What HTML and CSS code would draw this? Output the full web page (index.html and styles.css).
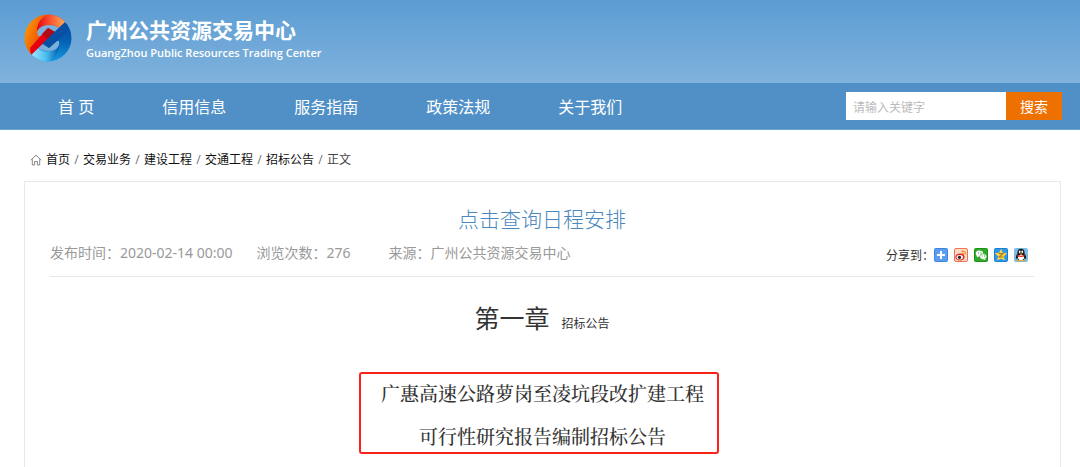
FILE: index.html
```html
<!DOCTYPE html>
<html lang="zh-CN">
<head>
<meta charset="utf-8">
<title>广州公共资源交易中心</title>
<link rel="stylesheet" href="styles.css">
</head>
<body>
<header class="banner">
  <svg class="logo" viewBox="0 0 48 48" aria-hidden="true">
    <defs>
      <linearGradient id="warm" x1="0" y1="0.2" x2="1" y2="0.6"><stop offset="0" stop-color="#ffa000"/><stop offset=".35" stop-color="#f25a08"/><stop offset=".8" stop-color="#e60012"/></linearGradient>
      <linearGradient id="cool" x1=".6" y1="0" x2=".4" y2="1"><stop offset="0" stop-color="#04459a"/><stop offset=".5" stop-color="#0560b4"/><stop offset="1" stop-color="#17a4e8"/></linearGradient>
      <linearGradient id="peach" x1="0" y1="0" x2="1" y2="0"><stop offset="0" stop-color="#e60012"/><stop offset=".4" stop-color="#fa4b2c"/><stop offset="1" stop-color="#ffb057"/></linearGradient>
      <linearGradient id="ice" x1="0" y1="0" x2="1" y2="0"><stop offset="0" stop-color="#a6e6ff"/><stop offset=".55" stop-color="#49bdf0"/><stop offset="1" stop-color="#005bac"/></linearGradient>
      <clipPath id="disc"><circle cx="24" cy="24" r="23.5"/></clipPath>
    </defs>
    <g clip-path="url(#disc)">
      <path fill="url(#warm)" d="M0 0H48L7 41L0 48Z"/>
      <path fill="url(#cool)" d="M48 0V48H0L7 41L41 8Z"/>
      <path fill="url(#peach)" d="M13 15C14 5 22 0 29 0C36 1 40 4 42 8L35 14C30 9 21 9 13 17Z"/>
      <path fill="url(#ice)" d="M7 41L14 34C19 39 27 39 35 31C34 42 28 48 22 48C15 47 10 45 7 41Z"/>
      <path fill="#7bb0db" d="M14 22C11 15 18 11 25 11C30 11 33 12 35 14L30 19L24 15L17 22Z"/>
      <path fill="#7bb0db" d="M14 34L18 30L25 34L32 27H35C36 34 31 37 24 37C20 37 16 36 14 34Z"/>
      <path fill="#e60012" d="M7 41L31 18L24 14L6 34Z"/>
      <path fill="#b00b16" d="M18 20L24 14L31 18L24 25Z"/>
      <path fill="#0850a4" d="M19 29L41 8L44 17L32 28L25 34Z"/>
    </g>
  </svg>
  <div class="brand">
    <div class="site-name">广州公共资源交易中心</div>
    <div class="site-sub">GuangZhou Public Resources Trading Center</div>
  </div>
</header>
<nav class="nav">
  <div class="menu">
    <a href="#">首&nbsp;页</a><a href="#">信用信息</a><a href="#">服务指南</a><a href="#">政策法规</a><a href="#">关于我们</a>
  </div>
  <form class="search">
    <input type="text" aria-label="请输入关键字" placeholder="请输入关键字">
    <button type="button">搜索</button>
  </form>
</nav>
<main class="page">
  <div class="crumbs">
    <svg class="home" viewBox="0 0 12 12" aria-hidden="true"><path d="M.7 6.2L6 1.2L11.3 6.2M2.3 5.2V11H4.6V7.5H7.4V11H9.7V5.2" fill="none" stroke="#888"/></svg>
    <a href="#">首页</a><i>/</i><a href="#">交易业务</a><i>/</i><a href="#">建设工程</a><i>/</i><a href="#">交通工程</a><i>/</i><a href="#">招标公告</a><i>/</i><span>正文</span>
  </div>
  <article class="panel">
    <h1 class="title"><a href="#">点击查询日程安排</a></h1>
    <div class="meta">
      <span class="date">发布时间：2020-02-14 00:00</span>
      <span class="views">浏览次数：276</span>
      <span>来源：广州公共资源交易中心</span>
      <div class="share">
        <span>分享到：</span>
        <a href="#" aria-label="更多"><svg viewBox="0 0 14 14"><rect width="14" height="14" rx="2" fill="#3e86dc"/><rect x="1" y="1" width="12" height="12" rx="1" fill="#5c9df0"/><path d="M7 3V11M3 7H11" stroke="#fff" stroke-width="2"/></svg></a>
        <a href="#" aria-label="微博"><svg viewBox="0 0 14 14"><rect x=".5" y=".5" width="13" height="13" rx="1.5" fill="#fbdcc9" stroke="#ee7550"/><path d="M7.5 3.2Q11.7 2.4 11.3 6.4M7.7 5.2Q9.6 4.8 9.4 6.5" fill="none" stroke="#f08a22" stroke-width="1.2"/><ellipse cx="6" cy="9" rx="4.7" ry="3.5" fill="#dc2924"/><ellipse cx="5.8" cy="9.3" rx="3.2" ry="2.2" fill="#fff"/><circle cx="5.5" cy="9.3" r="1.6" fill="#222"/></svg></a>
        <a href="#" aria-label="微信"><svg viewBox="0 0 14 14"><rect width="14" height="14" rx="2" fill="#189417"/><rect x="1" y="1" width="12" height="12" rx="1" fill="#30a928"/><ellipse cx="5.5" cy="5.5" rx="3.7" ry="3" fill="#fff"/><path d="M3 7L2.8 9.5L5.5 8Z" fill="#fff"/><ellipse cx="9.2" cy="8.6" rx="3.5" ry="2.8" fill="#fff" stroke="#30a928" stroke-width=".6"/><path d="M9 11L11.5 12L11 10Z" fill="#fff"/><path d="M4 5H5M6.5 5H7.5M7.6 8H8.5M10 8H11" stroke="#279421"/></svg></a>
        <a href="#" aria-label="QQ空间"><svg viewBox="0 0 14 14"><rect width="14" height="14" rx="2" fill="#1680d2"/><rect x="1" y="1" width="12" height="12" rx="1" fill="#3299e8"/><path d="M7 .8L8.8 4.8L13.2 5.2L9.9 8.3L10.8 12.6L7 10.4L3.2 12.6L4.1 8.3L.8 5.2L5.2 4.8Z" fill="#ffd53b"/><path d="M4.8 5.5H9L5 9H9.4" fill="none" stroke="#a9782b" stroke-width="1.1"/></svg></a>
        <a href="#" aria-label="QQ好友"><svg viewBox="0 0 14 14"><rect width="14" height="14" rx="2" fill="#79bde9"/><path d="M2 11Q1.5 7 3.5 6Q3 .8 7 .8Q11 .8 10.5 6Q12.5 7 12 11L10.5 10L10 12H4L3.5 10Z" fill="#161616"/><ellipse cx="7" cy="9.5" rx="3" ry="2.7" fill="#fff"/><path d="M3.3 6.8Q7 8.8 10.7 6.8V8.3Q7 9.8 3.3 8.3Z" fill="#e62820"/><ellipse cx="5.7" cy="3.7" rx=".9" ry="1.2" fill="#fff"/><ellipse cx="8.3" cy="3.7" rx=".9" ry="1.2" fill="#fff"/><path d="M5 5.6H9L7 6.7ZM2.5 12H6.5V13.3H2.5ZM7.5 12H11.5V13.3H7.5Z" fill="#f5a51c"/></svg></a>
      </div>
    </div>
    <h2 class="chapter">第一章<small>招标公告</small></h2>
    <div class="notice-row">
      <div class="notice">
        <p>广惠高速公路萝岗至凌坑段改扩建工程</p>
        <p>可行性研究报告编制招标公告</p>
      </div>
    </div>
  </article>
</main>
</body>
</html>
```
FILE: styles.css
```css
* { box-sizing: border-box; }
body {
  margin: 0;
  background: #fff;
  color: #333;
  font: 12px/20px "Noto Sans", "Noto Sans CJK SC", sans-serif;
}
a { color: inherit; text-decoration: none; }
.banner {
  display: flex;
  align-items: center;
  gap: 14px;
  height: 83px;
  padding: 0 24px 7px;
  background: linear-gradient(#5b9cd3, #80b2dc);
  color: #fff;
  font-weight: 700;
}
.logo { width: 48px; height: 48px; }
.brand { padding-top: 4px; }
.site-name { font-size: 21px; line-height: 26px; }
.site-sub { font: 600 11px/20px "Open Sans", sans-serif; }
.nav {
  display: flex;
  align-items: center;
  justify-content: space-between;
  height: 47px;
  padding: 0 18px 0 58px;
  background: #5190c6;
  border-bottom: 1px solid #6fa5d3;
}
.menu { display: flex; gap: 68px; padding-top: 2px; color: #fff; font-size: 16px; line-height: 24px; }
.search { display: flex; height: 28px; }
.search input {
  width: 160px;
  padding: 0 7px;
  border: 0;
  border-radius: 0;
  background: #fff;
  font: 12px "Noto Sans CJK SC", sans-serif;
}
.search input::placeholder { color: #bbb; opacity: 1; }
.search button {
  width: 56px;
  padding: 0;
  border: 0;
  background: #ee7000;
  color: #fff;
  font: 14px "Noto Sans CJK SC", sans-serif;
}
.page { padding: 20px 19px 0 24px; }
.crumbs { display: flex; align-items: center; padding-left: 6px; color: #111; }
.crumbs i { width: 13px; color: #777; font-style: normal; text-align: center; }
.crumbs span { color: #444; }
.home { width: 12px; height: 12px; margin-right: 4px; }
.panel {
  margin-top: 11px;
  padding: 23px 26px 13px 25px;
  border: 1px solid #e8e8e8;
  border-bottom: 0;
}
.title { margin: 0; color: #4a87bd; font-size: 21px; font-weight: 300; line-height: 28px; text-align: center; }
.meta {
  display: flex;
  align-items: center;
  height: 44px;
  padding-bottom: 4px;
  border-bottom: 1px solid #e8e8e8;
  color: #999;
  font-size: 14px;
}
.date { margin-right: 24px; }
.views { margin-right: 38px; }
.share { display: flex; align-items: center; gap: 6px; margin: 4px 6px 0 auto; color: #333; font-size: 12px; }
.share span { margin-right: -6px; padding-top: 3px; }
.share a { display: flex; }
.share svg { width: 14px; height: 14px; }
.chapter { margin: 22px 0 0; font-size: 25px; font-weight: 400; line-height: 38px; text-align: center; }
.chapter small { margin-left: 12px; font-size: 12px; }
.notice-row { display: flex; justify-content: center; margin-top: 29px; padding-right: 6px; }
.notice {
  padding: 3px 13px 0 20px;
  border: 2px solid #fb2218;
  border-radius: 3px;
  font: 500 19px/32px "Noto Serif CJK SC", "Noto Sans CJK SC", serif;
  text-align: center;
}
.notice p { margin: 0; }
.notice p + p { margin-top: 11px; }
```
